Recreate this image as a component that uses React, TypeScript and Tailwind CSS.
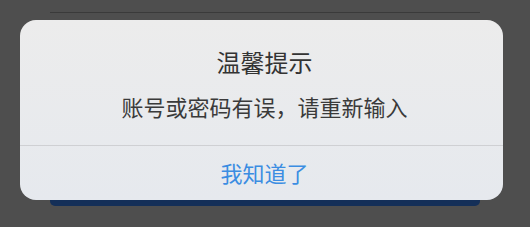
import React from "react";

export default function App() {
  const font = { fontFamily: '"Noto Sans CJK SC", "Noto Sans", sans-serif' };
  return (
    <div className="relative h-[227px] w-[530px] overflow-hidden bg-[#4e4e4e]" style={font}>
      <div className="mx-[50px] flex h-[206px] flex-col pt-[12px]">
        <div className="h-px bg-[#3a3a3a]" />
        <div className="flex-1" />
        <div className="h-[50px] rounded-b-[5px] bg-[#142f58]" />
      </div>
      <div className="absolute left-[20px] top-[20px] flex h-[180px] w-[483px] flex-col overflow-hidden rounded-[16px] bg-gradient-to-b from-[#ececec] to-[#e6e9ee]">
        <div className="flex h-[125px] flex-col items-center pl-[6px]">
          <div className="mt-[27px] text-[24px] leading-[30px] text-[#333333]">温馨提示</div>
          <div className="mt-[14px] text-[22px] leading-[30px] text-[#3a3a3a]">账号或密码有误，请重新输入</div>
        </div>
        <div className="h-px bg-[#cfd0d3]" />
        <div className="flex flex-1 items-center justify-center pb-[2px] pl-[6px]">
          <span className="text-[22px] leading-[30px] text-[#3b8de2]">我知道了</span>
        </div>
      </div>
    </div>
  );
}
